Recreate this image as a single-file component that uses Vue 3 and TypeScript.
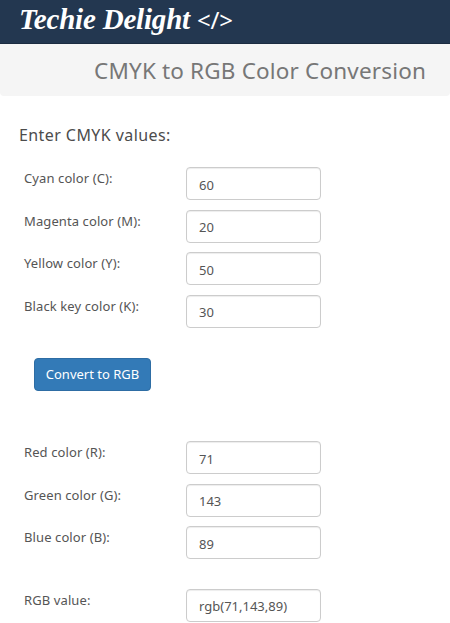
<script setup lang="ts">
interface Field {
  label: string
  value: string
}

const cmykFields: Field[] = [
  { label: 'Cyan color (C):', value: '60' },
  { label: 'Magenta color (M):', value: '20' },
  { label: 'Yellow color (Y):', value: '50' },
  { label: 'Black key color (K):', value: '30' },
]

const rgbFields: Field[] = [
  { label: 'Red color (R):', value: '71' },
  { label: 'Green color (G):', value: '143' },
  { label: 'Blue color (B):', value: '89' },
]
</script>

<template>
  <div class="page">
    <header class="brand">Techie Delight <span class="brand__tag">&lt;/&gt;</span></header>
    <div class="title-band">
      <h1>CMYK to RGB Color Conversion</h1>
    </div>

    <main class="content">
      <p class="intro">Enter CMYK values:</p>

      <div class="fields">
        <label v-for="f in cmykFields" :key="f.label" class="field">
          <span>{{ f.label }}</span>
          <input type="text" :value="f.value" readonly />
        </label>
      </div>

      <button class="convert" type="button">Convert to RGB</button>

      <div class="fields">
        <label v-for="f in rgbFields" :key="f.label" class="field">
          <span>{{ f.label }}</span>
          <input type="text" :value="f.value" readonly />
        </label>
      </div>

      <label class="field field--result">
        <span>RGB value:</span>
        <input type="text" value="rgb(71,143,89)" readonly />
      </label>
    </main>
  </div>
</template>

<style>
html,
body {
  margin: 0;
  background: #fff;
  overflow: hidden;
}
</style>

<style scoped>
.page {
  width: 450px;
  height: 623px;
  overflow: hidden;
  font-family: 'Noto Sans', 'Open Sans', sans-serif;
  color: #555;
}

.brand {
  height: 44px;
  box-sizing: border-box;
  padding-left: 19px;
  background: #233750;
  border-bottom: 1px solid #1b2c41;
  color: #fff;
  font-family: 'Liberation Serif', serif;
  font-style: italic;
  font-weight: 700;
  font-size: 29px;
  letter-spacing: -0.2px;
  line-height: 39px;
}

.brand__tag {
  font-family: 'Noto Sans', sans-serif;
  font-style: normal;
  font-weight: 400;
  font-size: 24px;
}

.title-band {
  height: 52px;
  box-sizing: border-box;
  padding-right: 24px;
  background: #f5f5f5;
  border-radius: 0 0 4px 4px;
  text-align: right;
}

.title-band h1 {
  margin: 0;
  font-size: 22.5px;
  font-weight: 400;
  letter-spacing: 0.17px;
  line-height: 53px;
  color: #777;
}

.content {
  padding: 0 0 0 19px;
}

.intro {
  margin: 0;
  padding-top: 29px;
  font-size: 16px;
  letter-spacing: 0.42px;
  line-height: 20px;
  color: #4c4c4c;
}

.fields {
  display: flex;
  flex-direction: column;
  gap: 9.6px;
  margin-top: 22px;
}

.field {
  display: flex;
  align-items: flex-start;
  padding-left: 5px;
  font-size: 13px;
  letter-spacing: 0.1px;
  line-height: 20px;
}

.field span {
  width: 162px;
  flex-shrink: 0;
  padding-top: 1px;
}

.field input {
  width: 135px;
  height: 33px;
  box-sizing: border-box;
  padding: 2px 12px 0;
  border: 1px solid #ccc;
  border-radius: 4px;
  outline: none;
  font: inherit;
  color: #555;
  box-shadow: inset 0 1px 1px rgba(0, 0, 0, 0.075);
}

.convert {
  display: block;
  width: 117px;
  height: 33px;
  margin: 30px 0 0 15px;
  padding: 0;
  border: 1px solid #2e6da4;
  border-radius: 4px;
  background: #337ab7;
  color: #fff;
  font: inherit;
  font-size: 13px;
}

.convert + .fields {
  margin-top: 50.4px;
}

.field--result {
  margin-top: 29.6px;
}
</style>
